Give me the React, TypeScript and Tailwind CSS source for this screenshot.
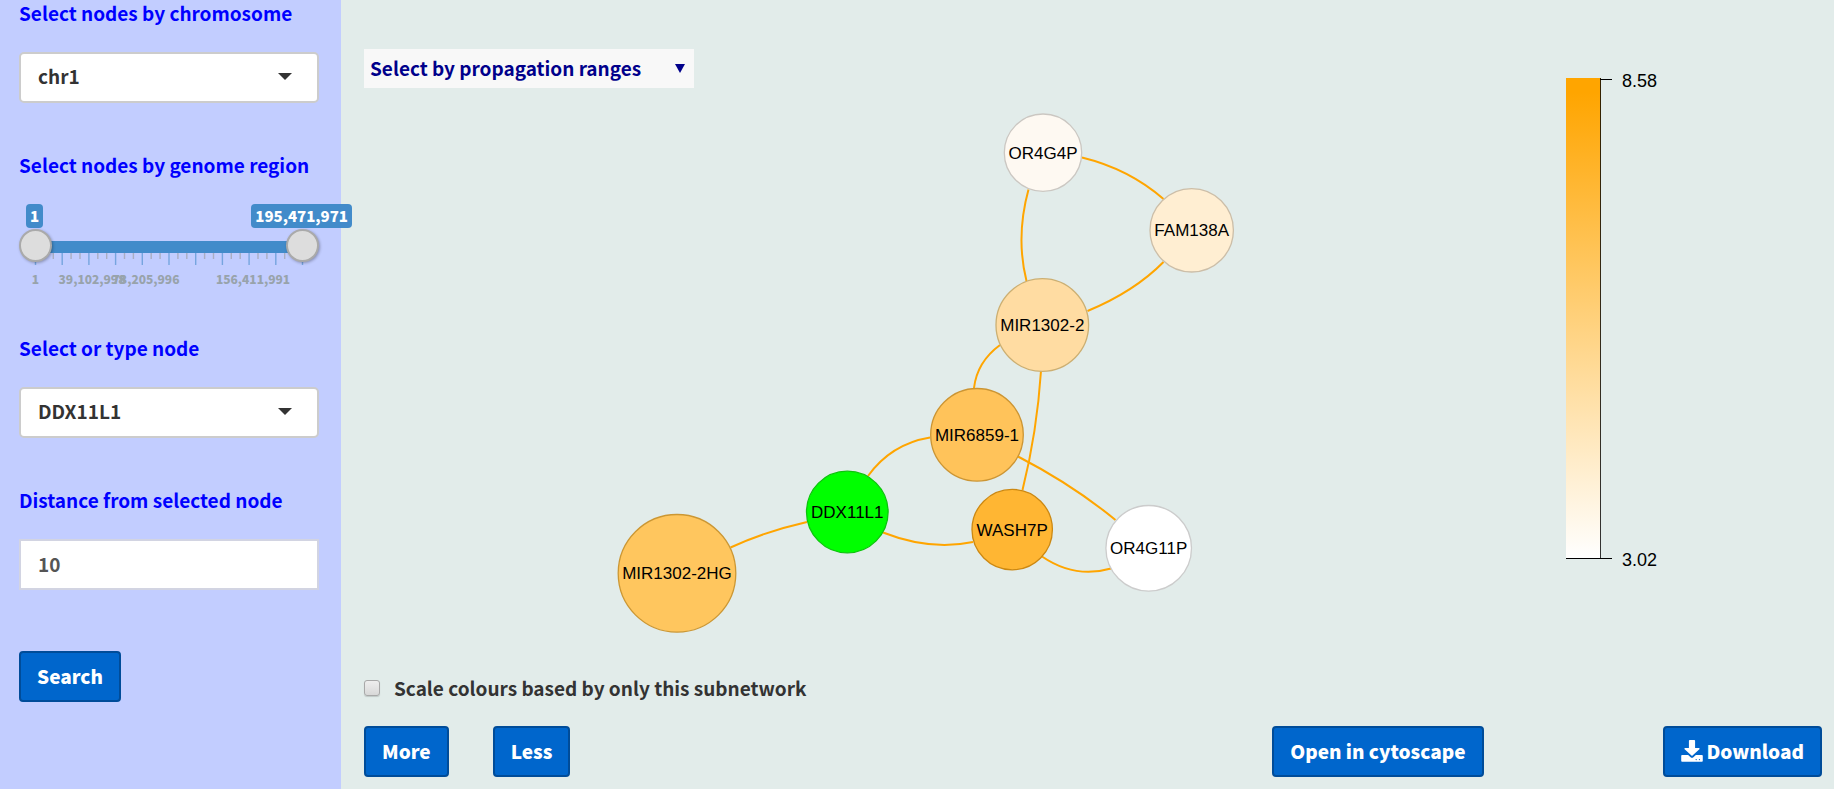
import { useState } from "react";
import type { ReactNode } from "react";

const MAX_POSITION = 195471971;

const nodes = [
  { label: "OR4G4P", x: 679, y: 64.7, r: 38.7, fill: "#fef9f2", stroke: "#cbc7c2" },
  { label: "FAM138A", x: 827.7, y: 142.3, r: 41.7, fill: "#ffeed2", stroke: "#ccbea8" },
  { label: "MIR1302-2", x: 678.3, y: 237, r: 46.3, fill: "#ffdca2", stroke: "#ccaf72" },
  { label: "MIR6859-1", x: 613, y: 346.8, r: 46.3, fill: "#ffc35a", stroke: "#cc9533" },
  { label: "DDX11L1", x: 483.3, y: 424, r: 40.8, fill: "#00ff00", stroke: "#0cc40c" },
  { label: "WASH7P", x: 648.2, y: 441.6, r: 40.2, fill: "#ffb633", stroke: "#cc8811" },
  { label: "OR4G11P", x: 784.7, y: 460.3, r: 42.8, fill: "#ffffff", stroke: "#cccccc" },
  { label: "MIR1302-2HG", x: 313, y: 485.3, r: 58.8, fill: "#ffc65e", stroke: "#cc9733" },
];

const edges = [
  "M718 69.5Q765 81 799.5 111",
  "M664.5 101.5Q651.5 149 662.5 193",
  "M799.5 174Q770.5 203.5 723.5 223",
  "M636 257Q613 274 610 300",
  "M677 283Q673 344 658.5 402",
  "M654 368.5Q709 397 751.5 432",
  "M504 388Q527 356 566 349.5",
  "M519 444.5Q566 463 609 454",
  "M678 468.5Q711 491 747 480.5",
  "M366.5 459.5Q401 443.5 443 434",
];

const majorTicks = Array.from({ length: 11 }, (_, i) => 16.5 + i * 26.7);
const minorTicks = Array.from({ length: 30 }, (_, i) => i)
  .filter((i) => i % 3 !== 0)
  .map((i) => 16.5 + i * 8.9);

const thumb =
  "pointer-events-none absolute inset-x-0 top-[25px] m-0 h-[33px] w-full appearance-none bg-transparent [&::-webkit-slider-thumb]:pointer-events-auto [&::-webkit-slider-thumb]:size-[33px] [&::-webkit-slider-thumb]:appearance-none [&::-webkit-slider-thumb]:rounded-full [&::-webkit-slider-thumb]:border-2 [&::-webkit-slider-thumb]:border-[#aaaaaa] [&::-webkit-slider-thumb]:bg-[#dddddd] [&::-webkit-slider-thumb]:shadow-[1px_1px_3px_rgba(0,0,0,0.3)]";

function Button({ children }: { children: ReactNode }) {
  return (
    <button
      type="button"
      className="flex h-[51px] items-center gap-1 rounded-[4px] border-2 border-[#004c99] bg-[#0066cc] px-4 pb-px font-black whitespace-nowrap text-white"
    >
      {children}
    </button>
  );
}

function SelectField({ id, label, options }: { id: string; label: string; options: string[] }) {
  return (
    <div className="flex flex-col gap-[26px]">
      <label htmlFor={id} className="leading-[26px] font-bold text-[#0000ff]">
        {label}
      </label>
      <div className="relative">
        <select
          id={id}
          className="h-[51px] w-full appearance-none rounded-[5px] border-2 border-[#cccccc] bg-white px-[17px] pb-[3px] font-bold text-[#333333]"
        >
          {options.map((option) => (
            <option key={option}>{option}</option>
          ))}
        </select>
        <svg viewBox="0 0 14 7" className="pointer-events-none absolute top-[21px] right-[27px] h-[7px] w-[14px]" aria-hidden="true">
          <path d="M0 0h14L7 7z" fill="#333333" />
        </svg>
      </div>
    </div>
  );
}

function RegionSlider() {
  const [low, setLow] = useState(1);
  const [high, setHigh] = useState(MAX_POSITION);
  return (
    <fieldset>
      <legend className="mb-[26px] leading-[26px] font-bold whitespace-nowrap text-[#0000ff]">Select nodes by genome region</legend>
      <div className="relative h-[82px]">
        <div className="flex justify-between">
          <output className="ml-[7px] flex h-6 items-center rounded-[4px] bg-[#428bca] px-1 text-[15px] font-black text-white">
            {low.toLocaleString("en-US")}
          </output>
          <output className="-mr-[33px] flex h-6 items-center rounded-[4px] bg-[#428bca] px-1 text-[15px] font-black text-white">
            {high.toLocaleString("en-US")}
          </output>
        </div>
        <div className="mx-4 mt-[13px] h-3 bg-[#428bca]" />
        <svg viewBox="0 0 300 12" className="h-3 w-full" aria-hidden="true">
          {majorTicks.map((x) => (
            <path key={x} d={`M${x} 0v12`} stroke="#428bca" strokeOpacity="0.6" strokeWidth="1.4" />
          ))}
          {minorTicks.map((x) => (
            <path key={x} d={`M${x} 0v6`} stroke="#999999" strokeOpacity="0.6" strokeWidth="1.4" />
          ))}
        </svg>
        <svg viewBox="0 0 300 28" className="h-7 w-full text-[12px] font-black" textAnchor="middle" fill="#98a3ab">
          <text x="16.5" y="19">1</text>
          <text x="73" y="19">39,102,998</text>
          <text x="127" y="19">78,205,996</text>
          <text x="234" y="19">156,411,991</text>
        </svg>
        <input
          type="range"
          aria-label="Region start"
          min={1}
          max={MAX_POSITION}
          value={low}
          onChange={(e) => setLow(Math.min(Number(e.target.value), high))}
          className={thumb}
        />
        <input
          type="range"
          aria-label="Region end"
          min={1}
          max={MAX_POSITION}
          value={high}
          onChange={(e) => setHigh(Math.max(Number(e.target.value), low))}
          className={thumb}
        />
      </div>
    </fieldset>
  );
}

function Network() {
  return (
    <svg viewBox="0 0 1200 560" className="h-auto w-full font-['Liberation_Sans',Arial,sans-serif] text-[17px]" role="img" aria-label="Gene network">
      <g fill="none" stroke="orange" strokeWidth="2">
        {edges.map((d) => (
          <path key={d} d={d} />
        ))}
      </g>
      {nodes.map((n) => (
        <g key={n.label}>
          <circle cx={n.x} cy={n.y} r={n.r} fill={n.fill} stroke={n.stroke} strokeWidth="1.3" />
          <text x={n.x} y={n.y + 6} textAnchor="middle" fill="#000000">
            {n.label}
          </text>
        </g>
      ))}
    </svg>
  );
}

function ColourScale() {
  return (
    <svg viewBox="0 0 258 520" className="mt-[11px] w-[258px] shrink-0 self-start font-['Liberation_Sans',Arial,sans-serif] text-[18px]" role="img" aria-label="Colour scale">
      <defs>
        <linearGradient id="scale" x1="0" y1="0" x2="0" y2="1">
          <stop offset="0" stopColor="orange" />
          <stop offset="0.03" stopColor="orange" />
          <stop offset="1" stopColor="white" />
        </linearGradient>
      </defs>
      <rect x="2" y="18" width="35" height="481" fill="url(#scale)" />
      <g fill="none" stroke="#000000" strokeWidth="1">
        <path d="M36.5 18v481" strokeOpacity="0.8" />
        <path d="M36 19.5h12M2 498.5h46" />
      </g>
      <text x="58" y="27">8.58</text>
      <text x="58" y="506">3.02</text>
    </svg>
  );
}

function DownloadIcon() {
  return (
    <svg viewBox="0 0 20 22" preserveAspectRatio="none" className="size-[22px]" fill="currentColor" aria-hidden="true">
      <path d="M8 0h4a.8.8 0 0 1 .8.8V8h3.4c.7 0 1 .8.5 1.300l-6.200 6.200a.7.7 0 0 1-1 0L3.300 9.300C2.800 8.800 3.100 8 3.800 8h3.400V.8A.8.8 0 0 1 8 0z" />
      <path
        fillRule="evenodd"
        d="M1 15h5.500l2 2a2 2 0 0 0 3 0l2-2H19a.8.8 0 0 1 .8.8v5.200a.8.8 0 0 1-.8.800H1a.8.8 0 0 1-.8-.8v-5.200A.8.8 0 0 1 1 15zm12.800 4a.6.6 0 1 0 0 1.200.6.6 0 0 0 0-1.200zm3 0a.6.6 0 1 0 0 1.200.6.6 0 0 0 0-1.200z"
      />
    </svg>
  );
}

export default function App() {
  return (
    <div className="flex min-h-screen bg-[#e2ecea] font-['Source_Sans_Pro','Noto_Sans_CJK_SC',sans-serif] text-[19px] leading-[28px]">
      <aside className="relative z-10 flex w-[341px] shrink-0 flex-col gap-[49px] bg-[#c2cdff] pr-[22px] pl-[19px]">
        <SelectField id="chromosome" label="Select nodes by chromosome" options={["chr1", "chr2", "chr3"]} />
        <RegionSlider />
        <SelectField id="node" label="Select or type node" options={["DDX11L1", "WASH7P", "FAM138A"]} />
        <div className="flex flex-col gap-[26px]">
          <label htmlFor="distance" className="leading-[26px] font-bold text-[#0000ff]">
            Distance from selected node
          </label>
          <input
            id="distance"
            type="text"
            inputMode="numeric"
            defaultValue="10"
            className="h-[51px] w-full border-2 border-[#d2d4e2] bg-white px-[17px] pb-[3px] font-bold text-[#555555]"
          />
        </div>
        <div className="flex pt-3">
          <Button>Search</Button>
        </div>
      </aside>

      <main className="flex min-w-0 flex-1 flex-col pt-[49px] pr-3 pb-3 pl-[23px]">
        <div className="flex">
          <div className="flex min-w-0 flex-1 flex-col">
            <div className="relative w-[330px]">
              <select
                aria-label="Select by propagation ranges"
                className="block h-[39px] w-full appearance-none bg-[#f8f8f8] px-[6px] pb-px font-bold text-[#00008b]"
              >
                <option>Select by propagation ranges</option>
              </select>
              <svg viewBox="0 0 10 9" className="pointer-events-none absolute top-[15px] right-[9px] h-[9px] w-[10px]" aria-hidden="true">
                <path d="M0 0h10L5 9z" fill="#00008b" />
              </svg>
            </div>
            <Network />
          </div>
          <ColourScale />
        </div>
        <label className="mt-[26px] flex items-center gap-[14px] font-bold text-[#333333]">
          <input
            type="checkbox"
            className="size-4 appearance-none rounded-[3px] border border-[#a8a8a8] bg-linear-to-b from-[#eeeeee] to-[#d8d8d8] shadow-[0_1px_1px_rgba(0,0,0,0.15)] checked:bg-[#0066cc]"
          />
          Scale colours based by only this subnetwork
        </label>
        <div className="mt-6 flex items-center justify-between">
          <div className="flex gap-[44px]">
            <Button>More</Button>
            <Button>Less</Button>
          </div>
          <div className="flex gap-[179px]">
            <Button>Open in cytoscape</Button>
            <Button>
              <DownloadIcon />
              Download
            </Button>
          </div>
        </div>
      </main>
    </div>
  );
}
